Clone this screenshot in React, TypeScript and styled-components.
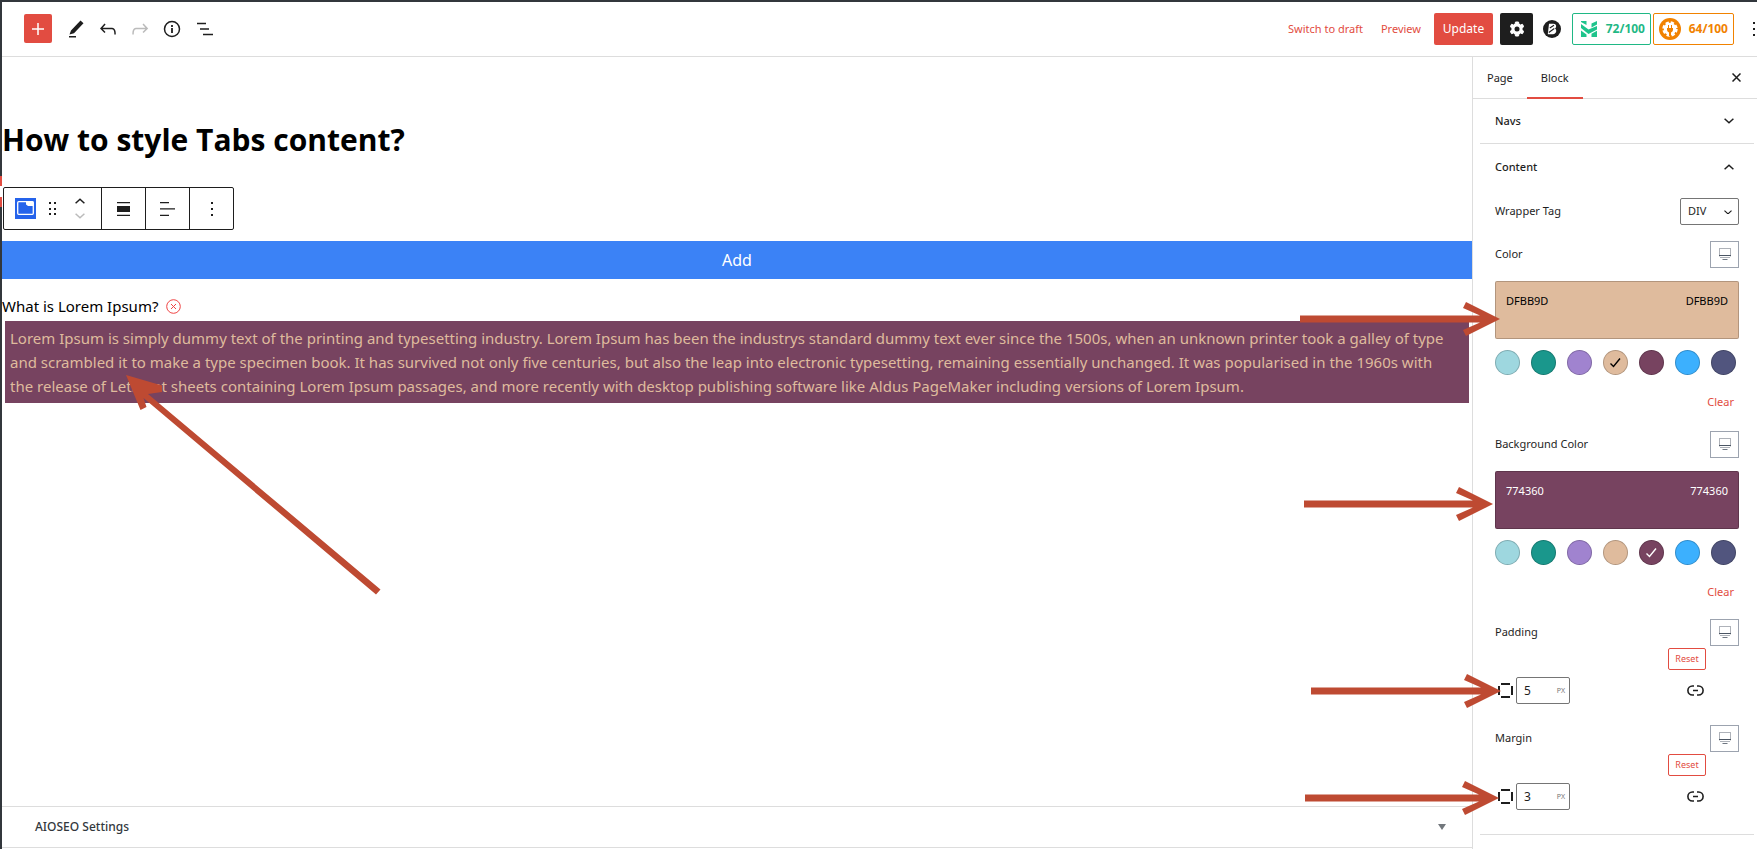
import React from "react";
import styled, { createGlobalStyle, css } from "styled-components";

const red = "#e24c41";
const ink = "#1e1e1e";
const line = "#dddddd";
const arrowColor = "#be4a32";

const GlobalStyle = createGlobalStyle`
  *, *::before, *::after { box-sizing: border-box; }
  body { margin: 0; background: #ffffff; color: ${ink}; font: 11px/16px "Noto Sans", "Open Sans", sans-serif; }
  button, input, select { font: inherit; color: inherit; margin: 0; }
  h1, h2, p { margin: 0; }
  svg { display: block; flex: none; }
`;

const Page = styled.div`
  display: grid;
  min-height: 100vh;
  border-top: 2px solid #32373c;
  overflow: hidden;
`;

const Frame = styled.div`
  position: relative;
  display: grid;
  grid-template-rows: auto 1fr;
  border-left: 2px solid #32373c;
`;

const EdgeMark = styled.span`
  position: absolute;
  left: -2px;
  top: 174px;
  width: 2px;
  height: 31px;
  border: solid ${red};
  border-width: 10px 0;
  background: #ffffff;
`;

const Header = styled.header`
  display: flex;
  justify-content: space-between;
  align-items: center;
  height: 55px;
  padding-bottom: 1px;
  border-bottom: 1px solid ${line};
`;

const HeaderTools = styled.div`
  display: flex;
  align-items: center;
  gap: 8px;
  padding-left: 22px;
`;

const HeaderActions = styled.div`
  display: flex;
  align-items: center;
`;

const PostActions = styled.div`
  display: flex;
  gap: 18px;
  margin-right: 13px;
`;

const IconButton = styled.button<{ $dim?: boolean }>`
  display: grid;
  place-items: center;
  width: 24px;
  height: 24px;
  padding: 0;
  border: 0;
  background: none;
  color: ${(p) => (p.$dim ? "#bbbbbb" : ink)};
`;

const AddBlock = styled(IconButton)`
  width: 28px;
  height: 29px;
  margin-right: 4px;
  border-radius: 2px;
  background: ${red};
  color: #ffffff;
`;

const TextButton = styled.button`
  padding: 0;
  border: 0;
  background: none;
  color: ${red};
`;

const UpdateButton = styled.button`
  width: 59px;
  height: 32px;
  margin-right: 7px;
  padding: 0;
  border: 0;
  border-radius: 2px;
  background: ${red};
  color: #ffffff;
  font-size: 12px;
`;

const SettingsButton = styled(IconButton)`
  width: 33px;
  height: 32px;
  margin-right: 10px;
  border-radius: 2px;
  background: ${ink};
  color: #ffffff;
`;

const BlocksButton = styled(IconButton)`
  width: 18px;
  margin-right: 11px;
`;

const Score = styled.button<{ $color: string; $width: number }>`
  display: flex;
  align-items: center;
  justify-content: space-between;
  width: ${(p) => p.$width}px;
  height: 32px;
  margin-right: 2px;
  padding: 0 5px;
  border: 1px solid ${(p) => p.$color};
  border-radius: 2px;
  background: #ffffff;
  color: ${(p) => p.$color};
  font-size: 12px;
  font-weight: 700;
`;

const MoreButton = styled(IconButton)`
  width: 21px;
  justify-content: end;
`;

const Body = styled.div`
  display: grid;
  grid-template-columns: minmax(0, 1fr) 285px;
`;

const Editor = styled.main`
  display: flex;
  flex-direction: column;
  color: #000000;
`;

const Title = styled.h1`
  margin-top: 61px;
  font-family: "Open Sans", "Noto Sans", sans-serif;
  font-size: 30px;
  line-height: 44px;
  font-weight: 700;
`;

const BlockToolbar = styled.div`
  display: flex;
  align-self: flex-start;
  height: 43px;
  margin: 25px 0 11px 1px;
  border: 1px solid ${ink};
  border-radius: 2px;
`;

const ToolGroup = styled.div`
  display: flex;
  align-items: center;
  justify-content: center;
  min-width: 44px;
  & + & { border-left: 1px solid ${ink}; }
`;

const BlockGroup = styled(ToolGroup)`
  width: 97px;
  gap: 3px;
`;

const Movers = styled.div`
  display: grid;
  gap: 7px;
  width: 24px;
  justify-items: center;
`;

const Mover = styled(IconButton)`
  height: 8px;
`;

const AddTab = styled.button`
  height: 38px;
  padding: 0;
  border: 0;
  background: #3b82f6;
  color: #ffffff;
  font-size: 16px;
  line-height: 24px;
`;

const TabLabel = styled.div`
  display: flex;
  align-items: center;
  gap: 8px;
  margin-top: 15px;
  font-size: 15px;
  line-height: 24px;
`;

const RemoveTab = styled(IconButton)`
  width: 15px;
  color: #ef4444;
`;

const TabContent = styled.div`
  position: relative;
  margin: 3px;
  padding: 5px 12px 5px 5px;
  background: #774360;
  color: #dfbb9d;
  font-size: 15px;
  line-height: 24px;
`;

const MetaBox = styled.button`
  display: flex;
  align-items: center;
  justify-content: space-between;
  height: 42px;
  margin-top: auto;
  margin-bottom: 1px;
  padding: 0 26px 0 33px;
  border: 0;
  border-top: 1px solid ${line};
  border-bottom: 1px solid ${line};
  background: #ffffff;
  color: #32373c;
  font-size: 12px;
  font-weight: 500;
`;

const Sidebar = styled.aside`
  position: relative;
  border-left: 1px solid ${line};
`;

const Tabs = styled.div`
  display: flex;
  height: 42px;
  padding-right: 9px;
  border-bottom: 1px solid ${line};
`;

const Tab = styled.button<{ $active?: boolean }>`
  height: 42px;
  padding: 0 14px;
  border: 0;
  background: none;
  ${(p) => p.$active && css`box-shadow: inset 0 -2px 0 0 ${red};`}
`;

const CloseButton = styled(IconButton)`
  align-self: center;
  margin-left: auto;
`;

const Panel = styled.section`
  margin: 0 3px 0 7px;
  padding: 0 15px;
  border-bottom: 1px solid ${line};
`;

const PanelHeading = styled.h2`
  font: inherit;
`;

const PanelToggle = styled.button`
  display: flex;
  align-items: center;
  justify-content: space-between;
  width: 100%;
  height: 44px;
  padding: 0 5px 0 0;
  border: 0;
  background: none;
  font-weight: 500;
`;

const ContentPanel = styled(Panel)`
  padding-top: 1px;
  padding-bottom: 24px;
`;

const Field = styled.div<{ $top: number }>`
  display: flex;
  align-items: center;
  justify-content: space-between;
  margin-top: ${(p) => p.$top}px;
  height: 28px;
`;

const SelectWrap = styled.span`
  position: relative;
  width: 59px;
  height: 27px;
  svg { position: absolute; right: 7px; top: 12px; pointer-events: none; }
`;

const Select = styled.select`
  appearance: none;
  display: block;
  width: 100%;
  height: 100%;
  padding: 0 7px;
  border: 1px solid #757575;
  border-radius: 2px;
  background: #ffffff;
`;

const DeviceButton = styled(IconButton)`
  width: 29px;
  height: 27px;
  border: 1px solid #9ca3af;
  color: #4b5563;
`;

const ColorBox = styled.button<{ $color: string; $text: string }>`
  display: flex;
  align-items: flex-start;
  justify-content: space-between;
  width: 100%;
  height: 58px;
  margin-top: 13px;
  padding: 11px 10px;
  border: 1px solid rgba(0, 0, 0, 0.2);
  border-radius: 2px;
  background: ${(p) => p.$color};
  color: ${(p) => p.$text};
`;

const Swatches = styled.div`
  display: flex;
  gap: 11px;
  margin-top: 11px;
`;

const Swatch = styled.button<{ $color: string; $check?: string }>`
  display: grid;
  place-items: center;
  width: 25px;
  height: 25px;
  padding: 0;
  border: 1px solid rgba(0, 0, 0, 0.2);
  border-radius: 50%;
  background: ${(p) => p.$color};
  color: ${(p) => p.$check || "transparent"};
`;

const ClearRow = styled.div`
  display: flex;
  justify-content: flex-end;
  margin: 19px 5px 0 0;
`;

const ResetRow = styled.div`
  display: flex;
  justify-content: flex-end;
  padding-right: 33px;
  margin-top: 2px;
`;

const ResetButton = styled.button`
  width: 38px;
  height: 22px;
  padding: 0;
  border: 1px solid ${red};
  border-radius: 2px;
  background: #ffffff;
  color: ${red};
  font-size: 9px;
`;

const SpacingRow = styled.div`
  display: flex;
  align-items: center;
  margin-top: 7px;
  padding: 0 32px 0 3px;
`;

const UnitInput = styled.label`
  display: flex;
  align-items: center;
  width: 54px;
  height: 27px;
  margin-left: 3px;
  margin-right: auto;
  padding: 0 4px 0 7px;
  border: 1px solid #757575;
  border-radius: 2px;
  color: #757575;
  font-size: 7px;
  input {
    flex: 1;
    min-width: 0;
    padding: 0;
    border: 0;
    outline: 0;
    background: none;
    color: ${ink};
    font-size: 12px;
  }
`;

const Pointer = styled.svg<{ $x: number; $y: number }>`
  position: absolute;
  left: ${(p) => p.$x}px;
  top: ${(p) => p.$y}px;
  pointer-events: none;
  z-index: 2;
`;

function RightArrow({ x, y, length }: { x: number; y: number; length: number }) {
  return (
    <Pointer $x={x} $y={y} width={length} height={36} fill={arrowColor} aria-hidden="true">
      <path d={`M0 14.500H${length - 20}L${length - 37} 7 ${length - 34} 1 ${length} 18 ${length - 34} 35 ${length - 37} 29 ${length - 20} 21.500H0z`} />
    </Pointer>
  );
}

const Chevron = ({ up, size = 10 }: { up?: boolean; size?: number }) => (
  <svg width={size} height={size * 0.6} viewBox="0 0 10 6" fill="none" stroke="currentColor" strokeWidth="1.500">
    <path d={up ? "M.6 5.200 5 1.200l4.400 4" : "M.6.8 5 4.800 9.400.8"} />
  </svg>
);

const MonitorIcon = () => (
  <svg width="15" height="13" viewBox="0 0 15 13" fill="none" stroke="currentColor">
    <path d="M2.500 1v7.500M13.500 1v7.500M2 .5h12M3 9.500h10" strokeOpacity=".45" />
    <path d="M2 7.500h12" />
    <path d="M5.500 11.500h5" strokeOpacity=".8" />
  </svg>
);

const CheckIcon = () => (
  <svg width="13" height="13" viewBox="0 0 13 13" fill="none" stroke="currentColor" strokeWidth="1.400">
    <path d="M1.500 7.500 4.500 10.500 11 2.500" />
  </svg>
);

const SidesIcon = () => (
  <svg width="15" height="15" viewBox="0 0 15 15" fill="none" stroke={ink} strokeWidth="2">
    <path d="M3 1h9M3 14h9M1 3v9M14 3v9" />
  </svg>
);

const LinkIcon = () => (
  <svg width="17" height="11" viewBox="0 0 17 11" fill="none" stroke={ink} strokeWidth="1.600">
    <path d="M7 1H5.400a4.500 4.500 0 0 0 0 9H7M10 1h1.600a4.500 4.500 0 0 1 0 9H10M6 5.500h5" />
  </svg>
);

const palette = ["#9ed7df", "#1a978c", "#a083cf", "#dfbb9d", "#774360", "#3cb0fe", "#51557e"];

function ColorControl({ label, value, text, top }: { label: string; value: string; text: string; top: number }) {
  return (
    <>
      <Field $top={top}>
        <span>{label}</span>
        <DeviceButton aria-label={`${label} device`}><MonitorIcon /></DeviceButton>
      </Field>
      <ColorBox $color={`#${value}`} $text={text}>
        <span>{value}</span>
        <span>{value}</span>
      </ColorBox>
      <Swatches>
        {palette.map((c) => {
          const on = c.slice(1).toUpperCase() === value;
          return (
            <Swatch key={c} $color={c} $check={on ? text : undefined} aria-label={c}>
              {on && <CheckIcon />}
            </Swatch>
          );
        })}
      </Swatches>
      <ClearRow><TextButton>Clear</TextButton></ClearRow>
    </>
  );
}

function SpacingControl({ label, value, top }: { label: string; value: string; top: number }) {
  return (
    <>
      <Field $top={top}>
        <span>{label}</span>
        <DeviceButton aria-label={`${label} device`}><MonitorIcon /></DeviceButton>
      </Field>
      <ResetRow><ResetButton>Reset</ResetButton></ResetRow>
      <SpacingRow>
        <SidesIcon />
        <UnitInput>
          <input aria-label={label} defaultValue={value} />
          PX
        </UnitInput>
        <IconButton aria-label={`Link ${label} sides`}><LinkIcon /></IconButton>
      </SpacingRow>
    </>
  );
}

export default function App() {
  return (
    <Page>
      <GlobalStyle />
      <Frame>
        <EdgeMark />
        <Header>
          <HeaderTools>
            <AddBlock aria-label="Add block">
              <svg width="12" height="12" viewBox="0 0 12 12" stroke="currentColor" strokeWidth="1.500"><path d="M6 0v12M0 6h12" /></svg>
            </AddBlock>
            <IconButton aria-label="Edit">
              <svg width="16" height="18" viewBox="0 0 16 18" fill="currentColor"><path d="m12.500.5 3 2.800L6 13.200l-4.500 1.300L3 10.500zM1 16h7v1.500H1z" /></svg>
            </IconButton>
            <IconButton aria-label="Undo">
              <svg width="24" height="24" viewBox="0 0 24 24" fill="currentColor"><path d="M18.300 11.700c-.6-.6-1.400-.9-2.300-.9H6.700l2.900-3.300-1.100-1-4.500 5L8.500 16l1-1-2.700-2.700H16c.5 0 .9.200 1.300.5 1 1 1 3.400 1 4.500v.3h1.500v-.2c0-1.500 0-4.300-1.500-5.700z" /></svg>
            </IconButton>
            <IconButton aria-label="Redo" $dim>
              <svg width="24" height="24" viewBox="0 0 24 24" fill="currentColor"><path d="M15.600 6.500l-1.100 1 2.900 3.300H8c-.9 0-1.700.3-2.300.9-1.400 1.500-1.400 4.200-1.400 5.600v.2h1.500v-.3c0-1.100 0-3.500 1-4.500.3-.3.7-.5 1.300-.5h9.200L14.500 15l1.100 1.100 4.600-4.600-4.600-5z" /></svg>
            </IconButton>
            <IconButton aria-label="Details">
              <svg width="18" height="18" viewBox="0 0 18 18" fill="none" stroke="currentColor" strokeWidth="1.500"><circle cx="9" cy="9" r="7.500" /><path d="M9 8v5M9 5v2" strokeWidth="1.800" /></svg>
            </IconButton>
            <IconButton aria-label="List view">
              <svg width="17" height="14" viewBox="0 0 17 14" stroke="currentColor" strokeWidth="1.500"><path d="M1 1.500h9M4 7h9M7 12.500h10" /></svg>
            </IconButton>
          </HeaderTools>
          <HeaderActions>
            <PostActions>
              <TextButton>Switch to draft</TextButton>
              <TextButton>Preview</TextButton>
            </PostActions>
            <UpdateButton>Update</UpdateButton>
            <SettingsButton aria-label="Settings">
              <svg width="14" height="16" viewBox="0 0 14 16"><path fill="currentColor" stroke="currentColor" strokeWidth="1" strokeLinejoin="round" d="M5.500 1h3l.5 2.200 1.300.8 2.200-.7 1.200 2.400L12 7.200v1.600l1.700 1.500-1.200 2.400-2.200-.7-1.300.8-.5 2.200h-3L5 12.800 3.700 12l-2.200.7L.3 10.300 2 8.800V7.200L.3 5.700l1.200-2.400 2.200.7L5 3.200z" /><circle cx="7" cy="8" r="2.500" fill={ink} /></svg>
            </SettingsButton>
            <BlocksButton aria-label="Block tools">
              <svg width="18" height="18" viewBox="0 0 18 18"><circle cx="9" cy="9" r="9" fill={ink} /><path d="M6 3.800h4.500c3 0 3.400 3.400 1.500 4.700 2.400 1.500 1.200 5.700-2 5.700H4.800L5.400 9z" fill="#fff" /><path d="m6.800 8 4.200-2.800M5.800 12.500l5.500-4" stroke={ink} strokeWidth="1.100" /></svg>
            </BlocksButton>
            <Score $color="#1fb885" $width={79}>
              <svg width="22" height="16" viewBox="-3 0 22 16" fill="#1fc48c"><path d="M0 0h5.500v4L0 1zM10.500 2.500 16 0v3.500l-5.500 3zM0 3l7.500 5.500L16 5v3.500L7.500 13 0 7zM0 9.500l5.500 4V16H0zM10.500 12.800 16 9.800V16h-5.500z" /></svg>
              72/100
            </Score>
            <Score $color="#f18200" $width={81}>
              <svg width="22" height="22" viewBox="0 0 22 22"><circle cx="11" cy="11" r="11" fill="#f18200" /><circle cx="11" cy="11" r="6.200" fill="#fff" /><circle cx="11" cy="11" r="6.500" fill="none" stroke="#fff" strokeWidth="2.400" strokeDasharray="3.200 1.900" /><path d="M8 10h6v2a3 3 0 0 1-2 2.500V18h-2v-3.500A3 3 0 0 1 8 12zM9 7h1v3H9zM12 7h1v3h-1z" fill="#f18200" /></svg>
              64/100
            </Score>
            <MoreButton aria-label="Options">
              <svg width="4" height="14" viewBox="0 0 4 14" fill="currentColor"><path d="M0 0h2v2H0zM0 6h2v2H0zM0 12h2v2H0z" /></svg>
            </MoreButton>
          </HeaderActions>
        </Header>
        <Body>
          <Editor>
            <Title>How to style Tabs content?</Title>
            <BlockToolbar>
              <BlockGroup>
                <IconButton aria-label="Tabs block">
                  <svg width="21" height="21" viewBox="0 0 21 21"><path d="M0 0h21v21H0z" fill="#2563eb" /><rect x="2.700" y="3.700" width="15.600" height="12.600" rx="1" fill="none" stroke="#fff" strokeWidth="1.300" /><path d="M11 3.500h7.500V8H13l-2-1.500z" fill="#fff" /></svg>
                </IconButton>
                <IconButton aria-label="Drag">
                  <svg width="8" height="14" viewBox="0 0 8 14" fill="currentColor"><path d="M0 0h2v2H0zM5 0h2v2H5zM0 6h2v2H0zM5 6h2v2H5zM0 11h2v2H0zM5 11h2v2H5z" /></svg>
                </IconButton>
                <Movers>
                  <Mover aria-label="Move up"><Chevron up /></Mover>
                  <Mover aria-label="Move down" $dim><Chevron /></Mover>
                </Movers>
              </BlockGroup>
              <ToolGroup>
                <IconButton aria-label="Align">
                  <svg width="13" height="14" viewBox="0 0 13 14" fill="currentColor"><path d="M0 0h13v1.300H0zM0 4h13v6H0zM0 12.700h13V14H0z" /></svg>
                </IconButton>
              </ToolGroup>
              <ToolGroup>
                <IconButton aria-label="Align text">
                  <svg width="15" height="14" viewBox="0 0 15 14" fill="currentColor"><path d="M0 0h9v1.300H0zM0 6.300h15v1.300H0zM0 12.700h9V14H0z" /></svg>
                </IconButton>
              </ToolGroup>
              <ToolGroup>
                <IconButton aria-label="More">
                  <svg width="2" height="14" viewBox="0 0 2 14" fill="currentColor"><path d="M0 0h2v2H0zM0 6h2v2H0zM0 12h2v2H0z" /></svg>
                </IconButton>
              </ToolGroup>
            </BlockToolbar>
            <AddTab>Add</AddTab>
            <TabLabel>
              What is Lorem Ipsum?
              <RemoveTab aria-label="Remove tab">
                <svg width="15" height="15" viewBox="0 0 15 15" fill="none" stroke="currentColor"><circle cx="7.500" cy="7.500" r="6.800" /><path d="m5 5 5 5M10 5l-5 5" /></svg>
              </RemoveTab>
            </TabLabel>
            <TabContent>
              <p>
                Lorem Ipsum is simply dummy text of the printing and typesetting industry. Lorem Ipsum has been the
                industrys standard dummy text ever since the 1500s, when an unknown printer took a galley of type and
                scrambled it to make a type specimen book. It has survived not only five centuries, but also the leap
                into electronic typesetting, remaining essentially unchanged. It was popularised in the 1960s with the
                release of Letraset sheets containing Lorem Ipsum passages, and more recently with desktop publishing
                software like Aldus PageMaker including versions of Lorem Ipsum.
              </p>
              <Pointer $x={121} $y={54} width={256} height={220} fill={arrowColor} aria-hidden="true">
                <path d="M0 0 36 10.500 36 17 22 19 254.500 214.500 250 219.500 17.500 23 20.500 32 14.500 35z" />
              </Pointer>
            </TabContent>
            <MetaBox>
              AIOSEO Settings
              <svg width="8" height="6" viewBox="0 0 8 6" fill="#72777c"><path d="M0 0h8L4 6z" /></svg>
            </MetaBox>
          </Editor>
          <Sidebar>
            <Tabs>
              <Tab>Page</Tab>
              <Tab $active>Block</Tab>
              <CloseButton aria-label="Close settings">
                <svg width="9" height="9" viewBox="0 0 9 9" stroke="currentColor" strokeWidth="1.500"><path d="m.5.5 8 8M8.500.5l-8 8" /></svg>
              </CloseButton>
            </Tabs>
            <Panel>
              <PanelHeading><PanelToggle>Navs<Chevron /></PanelToggle></PanelHeading>
            </Panel>
            <ContentPanel>
              <PanelHeading><PanelToggle>Content<Chevron up /></PanelToggle></PanelHeading>
              <Field $top={8}>
                <label htmlFor="wrapper-tag">Wrapper Tag</label>
                <SelectWrap>
                  <Select id="wrapper-tag" defaultValue="DIV"><option>DIV</option></Select>
                  <Chevron size={8} />
                </SelectWrap>
              </Field>
              <ColorControl label="Color" value="DFBB9D" text="#000000" top={15} />
              <ColorControl label="Background Color" value="774360" text="#ffffff" top={20} />
              <SpacingControl label="Padding" value="5" top={18} />
              <SpacingControl label="Margin" value="3" top={20} />
            </ContentPanel>
            <RightArrow x={-173} y={244} length={200} />
            <RightArrow x={-169} y={429} length={189} />
            <RightArrow x={-162} y={616} length={190} />
            <RightArrow x={-168} y={723} length={194} />
          </Sidebar>
        </Body>
      </Frame>
    </Page>
  );
}
